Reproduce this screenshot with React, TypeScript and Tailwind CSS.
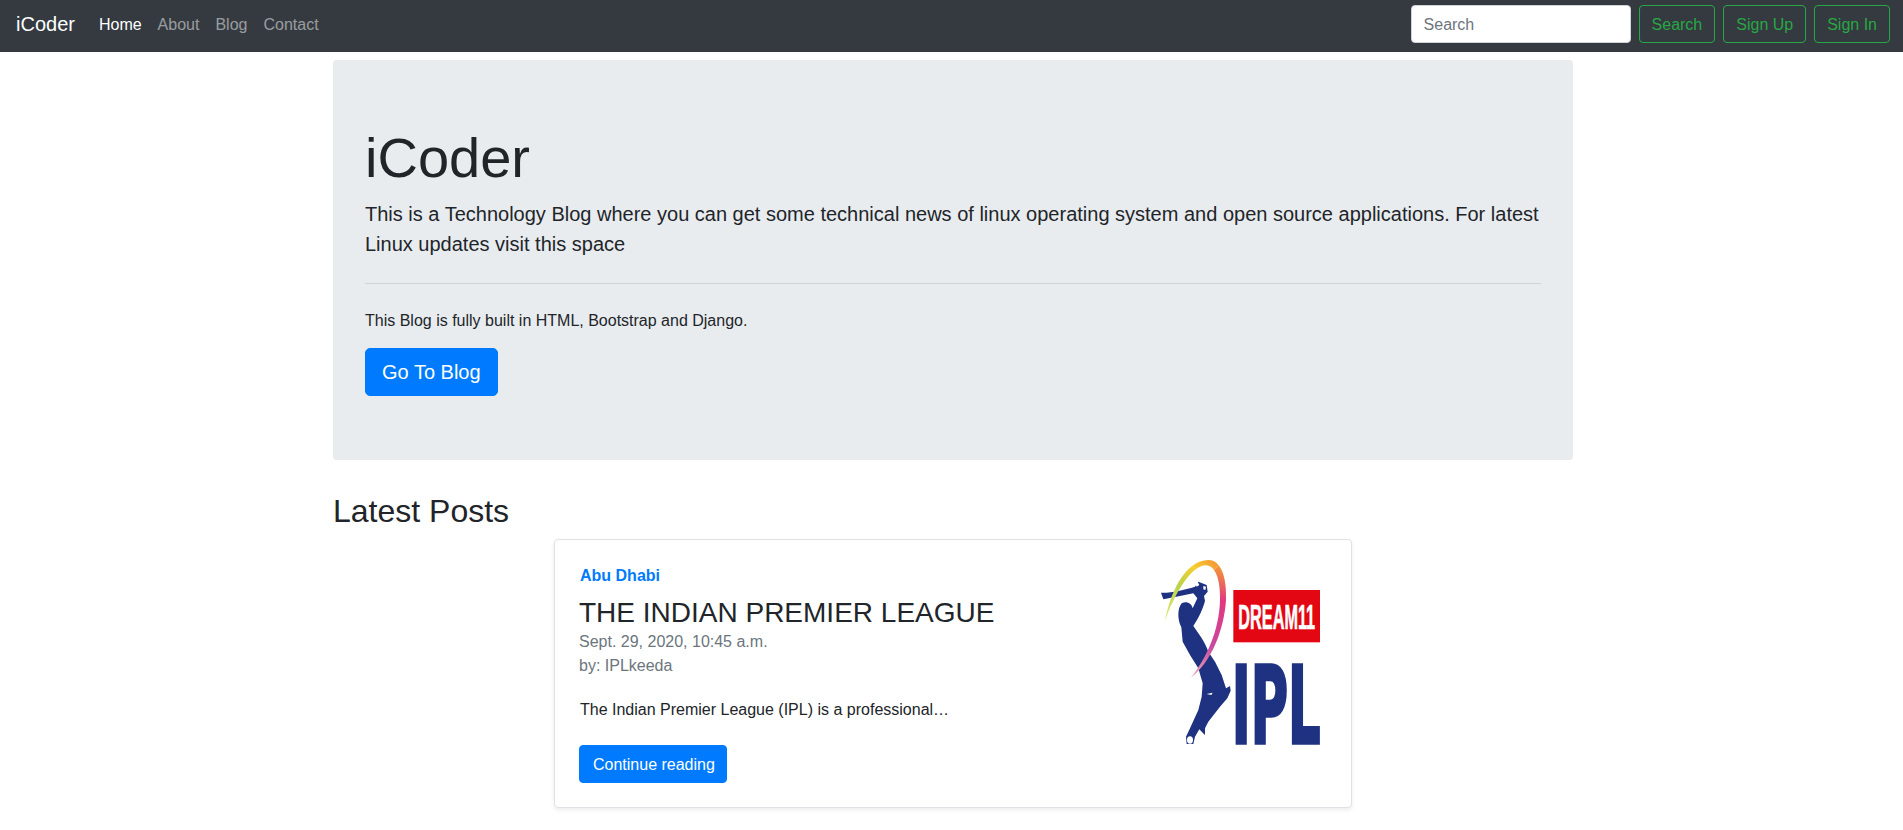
const NAV_LINKS = ['About', 'Blog', 'Contact']
const AUTH_BUTTONS = ['Search', 'Sign Up', 'Sign In']

function IplLogo() {
  return (
    <svg viewBox="30 0 600 660" className="mr-px block h-[220px] w-[200px] shrink-0" aria-hidden="true">
      <defs>
        <linearGradient id="arcTop" x1="75" y1="200" x2="236" y2="80" gradientUnits="userSpaceOnUse">
          <stop offset="0" stopColor="#d9e36a" />
          <stop offset="0.35" stopColor="#b9d34a" />
          <stop offset="0.7" stopColor="#f7cf2e" />
          <stop offset="1" stopColor="#f59a35" />
        </linearGradient>
        <linearGradient id="arcSide" x1="236" y1="76" x2="170" y2="414" gradientUnits="userSpaceOnUse">
          <stop offset="0" stopColor="#f59a35" />
          <stop offset="0.3" stopColor="#e2377f" />
          <stop offset="0.7" stopColor="#c9489f" />
          <stop offset="1" stopColor="#e9a9b4" />
        </linearGradient>
      </defs>
      {/* player */}
      <path
        fill="#1f3282"
        d="M63 158 C90 160 130 150 165 140 L175 125 L200 135 L203 155 L192 168 L195 182 C190 205 175 235 160 258 C175 280 195 305 205 335 L225 365 L245 405 L258 445 L270 438 L272 452 L262 475 L240 500 L205 545 L195 565 L195 585 L185 575 L178 568 L165 590 L160 612 L140 612 L138 590 L150 565 L175 510 L185 470 L188 430 L175 385 L150 345 L128 305 L124 262 C112 240 112 205 125 190 C140 182 155 190 158 205 L172 175 L160 160 L120 168 L70 178 Z"
      />
      <ellipse cx="150" cy="600" rx="9" ry="11" fill="#ffffff" />
      <path fill="#ffffff" d="M200 462 L218 458 L214 465 Z" />
      <path fill="#ffffff" d="M164 128 L172 124 L178 135 L170 140 Z M190 138 L198 140 L196 150 L190 148 Z" />
      {/* arc */}
      <path
        fill="url(#arcTop)"
        d="M75 243 C88 170 130 62 205 60 C218 60 228 65 236 76 L222 90 C215 80 205 76 195 76 C150 80 100 170 75 243 Z"
      />
      <path
        fill="url(#arcSide)"
        d="M236 76 C252 95 260 135 258 180 C252 270 215 365 152 414 C200 355 238 270 240 180 C241 140 235 108 222 90 Z"
      />
      <rect x="280" y="150" width="260" height="157" fill="#e30613" />
      <text
        transform="translate(295 268) scale(0.456 1)"
        fill="#ffffff"
        stroke="#ffffff"
        strokeWidth="2"
        className="font-['Liberation_Sans',sans-serif] font-bold"
        fontSize="107"
      >
        DREAM11
      </text>
      <text
        transform="translate(275 610) scale(0.475 1)"
        fill="#1f3282"
        stroke="#1f3282"
        strokeWidth="10"
        className="font-['DejaVu_Sans',sans-serif] font-bold"
        fontSize="322"
      >
        IPL
      </text>
    </svg>
  )
}

export default function App() {
  return (
    <div className="min-h-[830px] bg-white font-['Liberation_Sans',Arial,sans-serif] text-base leading-6 text-[#212529]">
      <nav className="flex h-[52px] items-center bg-[#343a40] pb-1 pl-4 pr-[13px]">
        <a className="mr-4 text-xl leading-[30px] text-white">iCoder</a>
        <ul className="flex pt-[2px]">
          <li className="px-2 text-white">Home</li>
          {NAV_LINKS.map(link => (
            <li key={link} className="px-2 text-white/50">
              {link}
            </li>
          ))}
        </ul>
        <form className="ml-auto flex gap-2">
          <input
            placeholder="Search"
            className="h-[38px] w-[220px] rounded border border-[#ced4da] bg-white px-3 pt-[2px] text-base text-[#495057] placeholder:text-[#6c757d]"
          />
          {AUTH_BUTTONS.map(label => (
            <button
              key={label}
              type="button"
              className="h-[38px] rounded border border-[#28a745] px-3 pt-[2px] text-base text-[#28a745]"
            >
              {label}
            </button>
          ))}
        </form>
      </nav>

      <main className="ml-[333px] w-[1240px]">
        <section className="mt-2 mb-8 rounded bg-[#e9ecef] px-8 py-16">
          <h1 className="mb-2 text-[56px] leading-[1.2] font-light">iCoder</h1>
          <p className="mb-4 text-xl leading-[30px]">
            This is a Technology Blog where you can get some technical news of linux operating system and open source
            applications. For latest Linux updates visit this space
          </p>
          <hr className="my-6 border-black/10" />
          <p className="mb-[15px] pt-px">This Blog is fully built in HTML, Bootstrap and Django.</p>
          <a className="inline-block h-12 rounded-[5px] border border-[#007bff] bg-[#007bff] px-4 py-2 text-xl leading-[30px] text-white">
            Go To Blog
          </a>
        </section>

        <h2 className="mb-2 text-[32px] leading-[1.2] font-medium">Latest Posts</h2>

        <article className="ml-[221px] flex w-[798px] rounded border border-[#dee2e6] bg-white shadow-[0_2px_4px_rgba(0,0,0,0.075)]">
          <div className="flex-1 p-6">
            <strong className="mb-2 ml-px inline-block text-[#007bff]">Abu Dhabi</strong>
            <h3 className="mb-px text-[28px] leading-[1.2] font-medium">THE INDIAN PREMIER LEAGUE</h3>
            <div className="text-[#6c757d]">Sept. 29, 2020, 10:45 a.m.</div>
            <div className="mb-5 text-[#6c757d]">by: IPLkeeda</div>
            <p className="mb-[23px] ml-px">The Indian Premier League (IPL) is a professional…</p>
            <a className="inline-block h-[38px] rounded border border-[#007bff] bg-[#007bff] pt-[7px] pr-[11px] pb-[5px] pl-[13px] text-white">
              Continue reading
            </a>
          </div>
          <IplLogo />
        </article>
      </main>
    </div>
  )
}
